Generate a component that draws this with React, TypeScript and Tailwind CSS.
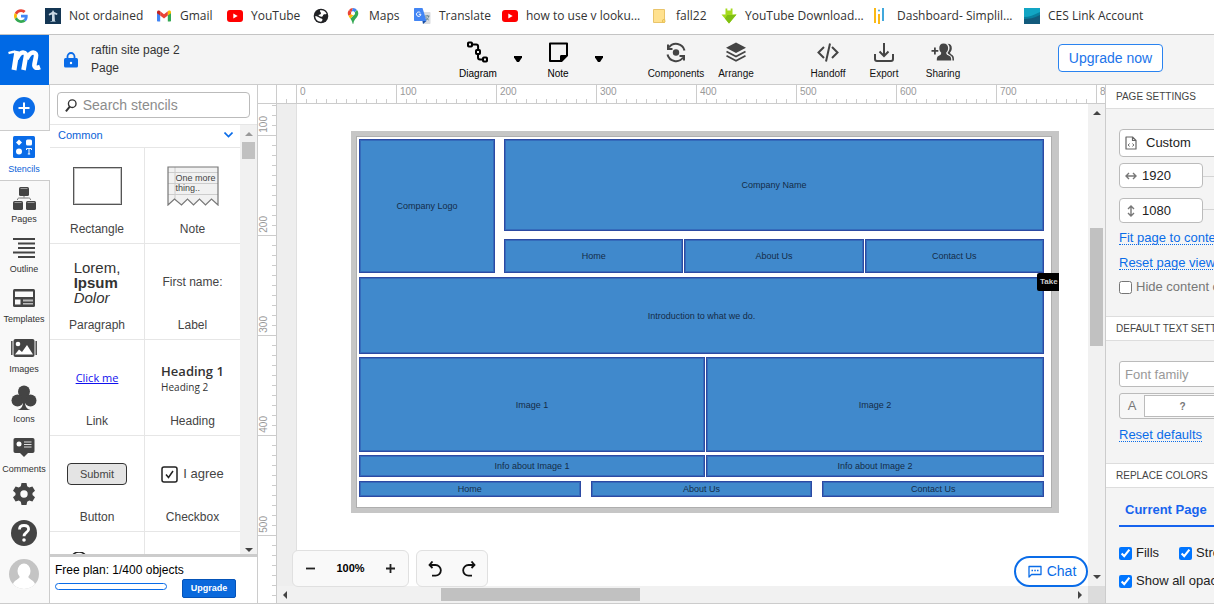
import React from "react";

const arial = "font-['Liberation_Sans',Arial,sans-serif]";

/* ---------- Bookmark icons ---------- */

const GoogleIcon = () => (
  <svg width="14" height="16" viewBox="0 0 48 52" className="shrink-0">
    <path fill="#ea4335" d="M24 12c3.500 0 6.600 1.200 9.100 3.600l6.800-6.800C35.900 5 30.500 2.500 24 2.500 14.600 2.500 6.500 7.900 2.600 15.700l7.900 6.100C12.400 16.200 17.700 12 24 12z" />
    <path fill="#4285f4" d="M47 26.500c0-1.600-.2-3.100-.4-4.500H24v9h12.900c-.6 3-2.200 5.500-4.800 7.200l7.700 6C44.300 40 47 33.900 47 26.500z" />
    <path fill="#fbbc05" d="M10.500 30.700A14 14 0 0 1 10.500 21.800L2.600 15.700a24 24 0 0 0 0 21z" />
    <path fill="#34a853" d="M24 50c6.500 0 11.900-2.100 15.900-5.800l-7.700-6c-2.200 1.400-4.900 2.300-8.200 2.300-6.300 0-11.600-4.200-13.500-9.900l-7.900 6.100C6.500 44.600 14.600 50 24 50z" />
  </svg>
);
const StatueIcon = () => (
  <svg width="16" height="16" viewBox="0 0 16 16" className="shrink-0">
    <rect width="16" height="16" fill="#143654" />
    <path d="M8 2l1.200 2 3.300 1.500-.5 1.500-2.500-.8.500 7.300H7L7 6.500 4 7.500 3.700 6 7 4z" fill="#c8d6e2" />
    <rect x="5.500" y="13" width="5" height="1" fill="#7d98ae" />
  </svg>
);
const GmailIcon = () => (
  <svg width="16" height="16" viewBox="0 0 16 16" className="shrink-0">
    <path d="M1 4v8.500c0 .6.400 1 1 1h2.200V7z" fill="#4285f4" />
    <path d="M15 4v8.500c0 .6-.4 1-1 1h-2.200V7z" fill="#34a853" />
    <path d="M11.800 3.600v4L15 5.200V4c0-1.500-1.600-2-2.600-1.200z" fill="#fbbc04" />
    <path d="M4.200 7.600V3.300L8 6.200l3.800-2.900v4.300L8 10.500z" fill="#ea4335" />
    <path d="M1 4v1.200l3.200 2.400V3.300l-.6-.5C2.600 2 1 2.500 1 4z" fill="#c5221f" />
  </svg>
);
const YouTubeIcon = () => (
  <svg width="16" height="16" viewBox="0 0 16 16" className="shrink-0">
    <rect y="2" width="16" height="12" rx="3" fill="#f00" />
    <path d="M6.300 5.500v5l4.400-2.500z" fill="#fff" />
  </svg>
);
const GlobeIcon = () => (
  <svg width="16" height="16" viewBox="0 0 16 16" className="shrink-0">
    <circle cx="8" cy="8" r="7.300" fill="#202124" />
    <path d="M7 2.300c3-.6 5.800 1 6.600 3.500-1 .8-2.300.2-3.200 1-.8.700-.2 1.700-1.400 1.900C7.400 9 6.200 8 5.300 7 6.500 6.800 7.900 6.500 8 5.300 8 4 6.500 3.800 7 2.300zM2.300 8c1.800.2 3.200 1 4.300 1.800 1 .7 2.500.6 2.900 1.700.2.900-.8 1.400-1.300 2.200C4.700 13.900 2.300 11.500 2.300 8z" fill="#fff" />
  </svg>
);
const MapsIcon = () => (
  <svg width="16" height="16" viewBox="0 0 16 16" className="shrink-0">
    <path d="M8 0a5.200 5.200 0 0 0-4 1.900l2.500 2.200z" fill="#ea4335" />
    <path d="M8 0l-1.500 4.100a2 2 0 0 1 3 .2L12 2A5.200 5.200 0 0 0 8 0z" fill="#4285f4" />
    <path d="M4 1.900A5.300 5.300 0 0 0 3.500 7.800L6.500 6.200A2 2 0 0 1 6.500 4.100z" fill="#ea4335" />
    <path d="M3.500 7.800c.4.900 1.100 1.800 1.900 2.900l4.100-4.900A2 2 0 0 1 6.400 6.200z" fill="#fbbc04" />
    <path d="M12 2 9.500 4.500c.4.600.4 1.300 0 1.900l-4.100 4.300C6.800 12.500 7.300 13.700 7.500 15.300c.1.900.9.900 1 0 .4-4.300 4.800-5.800 4.800-10A5.300 5.300 0 0 0 12 2z" fill="#34a853" />
    <circle cx="8" cy="5.300" r="1.800" fill="#fff" />
  </svg>
);
const TranslateIcon = () => (
  <svg width="17" height="16" viewBox="0 0 17 16" className="shrink-0">
    <path d="M6 4h9.500c.5 0 1 .4 1 1v10c0 .6-.4 1-1 1H9z" fill="#dadce0" />
    <path d="M1 0h7.500l4 13H1c-.6 0-1-.4-1-1V1c0-.6.400-1 1-1z" fill="#4285f4" />
    <path d="M9 16l3.500-3H8.500z" fill="#174ea6" />
    <path d="M6.900 6.300H4.800m1.600-1.500A2.200 2.200 0 1 0 6.900 6.400" fill="none" stroke="#fff" strokeWidth="1" />
    <path d="M11 8h4.500M13.200 7v1m1.500 0c-.3 2-1.500 3.500-2.700 4M11.800 9c.5 1.300 1.800 2.600 3 3" fill="none" stroke="#5f7f8c" strokeWidth=".9" />
  </svg>
);
const FolderIcon = () => (
  <svg width="16" height="16" viewBox="0 0 16 16" className="shrink-0">
    <path d="M1.500 1.500h11v13h-11z" fill="#ffe18f" stroke="#e9c46a" />
    <path d="M10.500 14.500V12l2-1 .500 2.500-.5 1z" fill="#ffd96e" stroke="#e6c15c" />
  </svg>
);
const DownloadIcon = () => (
  <svg width="16" height="16" viewBox="0 0 16 16" className="shrink-0">
    <path d="M4.500.5h1.800v2h3.400v-2h1.800V6.500h4L8 15.500.5 6.500h4z" fill="#a4da1c" />
    <path d="M6.300 7h5.200l4-.5L8 15.500l-4-5z" fill="#7fbf12" />
  </svg>
);
const DashboardIcon = () => (
  <svg width="16" height="16" viewBox="0 0 16 16" className="shrink-0">
    <path d="M2 0v15" stroke="#fbb917" strokeWidth="2" />
    <path d="M6 6v10" stroke="#fbb917" strokeWidth="2" />
    <path d="M10 0v13" stroke="#41a8dc" strokeWidth="2" />
    <circle cx="6" cy="2.500" r="1" fill="#41a8dc" />
  </svg>
);
const CesIcon = () => (
  <svg width="16" height="16" viewBox="0 0 16 16" className="shrink-0">
    <rect width="16" height="16" fill="#12a5c4" />
    <path d="M0 9C5 9 10 7 16 4v12H0z" fill="#087f9f" />
    <path d="M0 11c5 0 10-1 16-4v9H0z" fill="#125a7c" />
  </svg>
);

const bookmarks = [
  { label: "", name: "Google", icon: <GoogleIcon />, width: "w-[31px]" },
  { label: "Not ordained", name: "", icon: <StatueIcon />, width: "w-[111px]" },
  { label: "Gmail", name: "", icon: <GmailIcon />, width: "w-[71px]" },
  { label: "YouTube", name: "", icon: <YouTubeIcon />, width: "w-[86px]" },
  { label: "", name: "Website", icon: <GlobeIcon />, width: "w-[32px]" },
  { label: "Maps", name: "", icon: <MapsIcon />, width: "w-[69px]" },
  { label: "Translate", name: "", icon: <TranslateIcon />, width: "w-[88px]" },
  { label: "how to use v looku...", name: "", icon: <YouTubeIcon />, width: "w-[150px]" },
  { label: "fall22", name: "", icon: <FolderIcon />, width: "w-[69px]" },
  { label: "YouTube Download...", name: "", icon: <DownloadIcon />, width: "w-[152px]" },
  { label: "Dashboard- Simplil...", name: "", icon: <DashboardIcon />, width: "w-[151px]" },
  { label: "CES Link Account", name: "", icon: <CesIcon />, width: "w-[124px]" },
];

function BookmarksBar() {
  return (
    <nav aria-label="Bookmarks" className="flex h-[35px] shrink-0 items-center overflow-hidden border-b border-[#c4c4c4] bg-white pb-[2px] pl-[14px] font-['Open_Sans','Noto_Sans',sans-serif] text-xs text-[#333]">
      {bookmarks.map((b, i) => (
        <a key={i} href="#" aria-label={b.name || undefined} className={`flex shrink-0 items-center gap-2 whitespace-nowrap ${b.width}`}>
          {b.icon}
          {b.label && <span>{b.label}</span>}
        </a>
      ))}
    </nav>
  );
}

/* ---------- Header ---------- */

const DiagramIcon = () => (
  <svg width="24" height="24" viewBox="0 0 24 24" fill="none" stroke="#000" strokeWidth="2">
    <rect x="2" y="2.500" width="4" height="4" rx=".8" />
    <rect x="10" y="10" width="4" height="4" rx=".8" />
    <rect x="17" y="17.500" width="4" height="4" rx=".8" />
    <path d="M7 4.500h3.200c1.400 0 1.900.7 1.900 2V9M12 15v2.500c0 1.500.700 2 2 2h2" />
  </svg>
);
const NoteIcon = () => (
  <svg width="24" height="24" viewBox="0 0 24 24">
    <path d="M4 3.500h17v12l-5.500 5.500H4z" fill="none" stroke="#000" strokeWidth="2" strokeLinejoin="round" />
    <path d="M14 21.500v-5c0-1 .5-1.500 1.500-1.500h6z" />
  </svg>
);
const ComponentsIcon = () => (
  <svg width="24" height="24" viewBox="0 0 24 24" fill="none" stroke="#444" strokeWidth="2">
    <circle cx="12" cy="12.500" r="3.200" fill="#444" stroke="none" />
    <path d="M20.500 10.500A8.700 8.700 0 0 0 5 7.500M3.500 14.500A8.700 8.700 0 0 0 19 17.500" />
    <path d="M4 4.500v4.500h4.500M20 20.500v-4.500h-4.500" />
  </svg>
);
const ArrangeIcon = () => (
  <svg width="24" height="24" viewBox="0 0 24 24" fill="none" stroke="#444" strokeWidth="1.800">
    <path d="M12 2.500l10 5.200-10 5.300L2 7.700z" fill="#444" stroke="none" />
    <path d="M2.500 11.500l9.500 5 9.500-5M2.500 15.800l9.500 5 9.500-5" />
  </svg>
);
const HandoffIcon = () => (
  <svg width="24" height="24" viewBox="0 0 24 24" fill="none" stroke="#444" strokeWidth="2">
    <path d="M8 7L2.500 12.500l5.500 5.500M16 7l5.500 5.500L16 18M14 3.500l-4 18" />
  </svg>
);
const ExportIcon = () => (
  <svg width="24" height="24" viewBox="0 0 24 24" fill="none" stroke="#444" strokeWidth="2">
    <path d="M12 3v13M7.500 11.500L12 16l4.500-4.500M3 14v5c0 1.400.6 2 2 2h14c1.400 0 2-.6 2-2v-5" />
  </svg>
);
const SharingIcon = () => (
  <svg width="28" height="24" viewBox="0 0 28 24" fill="#444">
    <path d="M5 7.500h1.800V10H9.300v1.800H6.800v2.700H5v-2.700H2.500V10H5z" />
    <path d="M14.500 3.500c3 0 4.600 1.800 4.600 4.500 0 2-.7 3.600-1.900 4.600 0 2 1.200 2.500 3.400 3.500 1.200.6 1.600 1.600 1.600 4.400H7.800c0-2.800.4-3.800 1.600-4.400 2.200-1 2.800-1.500 2.800-3.500-1.200-1-1.900-2.600-1.900-4.600 0-2.700 1.400-4.500 4.200-4.500z" />
    <path d="M18.500 3.700c3 0 4.500 1.800 4.300 4.800-.1 1.700-.8 3-1.800 3.900.3 2 3.300 2.200 3.700 4.600.2 1 .3 2 .3 3.500h-1.500c0-3.500-.6-4.500-2.400-5.300-1.400-.7-2.400-1.200-2.500-2.600 2.700-3.200 2.500-7-.1-8.900z" />
  </svg>
);

function Tool({ label, icon, width, dark }: { label: string; icon: React.ReactNode; width: string; dark?: boolean }) {
  return (
    <button className={`flex flex-col items-center gap-1 text-[10px] leading-3 ${dark ? "text-black" : "text-[#111]"} ${width}`}>
      {icon}
      <span>{label}</span>
    </button>
  );
}
function Caret({ label }: { label: string }) {
  return (
    <button aria-label={label} className="flex w-5 items-center justify-center pb-[2px]">
      <svg width="8" height="6" viewBox="0 0 8 6"><path d="M0 0h8v1.500L5 6H3L0 1.500z" /></svg>
    </button>
  );
}

function Header() {
  return (
    <header className="flex h-[50px] shrink-0 bg-[#f4f4f4]">
      <a href="#" aria-label="Home" className="flex w-[49px] shrink-0 items-center justify-center bg-[#0069e5]">
        <svg width="33" height="21" viewBox="0 0 33 21" fill="none" stroke="#fff" strokeLinejoin="round">
          <path d="M.5 3.200C3 2.500 4.500 1.800 7 1.800" strokeWidth="2.400" />
          <path d="M9 1L6 20" strokeWidth="5" />
          <path d="M8.500 9C11 4 13 2.500 15 2.500c2.800 0 3.300 2 2.800 4.500L15.500 20" strokeWidth="4.600" />
          <path d="M18.500 9c2.500-5 4.500-6.500 6.700-6.500 2.500 0 3.200 2 2.700 4.500L26.500 14c-.6 3.400 1.500 4.600 5.500 3" strokeWidth="4.600" />
        </svg>
      </a>
      <div className="flex min-w-0 flex-1 items-center border-b border-[#ccc]">
        <div className="flex min-w-0 flex-1 items-center gap-[13px] pl-[15px]">
          <svg width="14" height="16" viewBox="0 0 14 16" className="shrink-0">
            <path d="M3.500 7V4.500a3.500 3.500 0 0 1 7 0V7" fill="none" stroke="#0a6ce8" strokeWidth="1.800" />
            <rect y="6" width="14" height="9.500" rx="1.500" fill="#0a6ce8" />
            <circle cx="7" cy="11" r="1.200" fill="#fff" />
          </svg>
          <div className="pb-[2px] text-xs leading-[18px] text-[#333]">
            <h1>raftin site page 2</h1>
            <p>Page</p>
          </div>
        </div>
        <div className="flex shrink-0 items-center">
          <Tool label="Diagram" icon={<DiagramIcon />} width="w-10" dark />
          <div className="w-[10px]" />
          <Caret label="Diagram options" />
          <div className="w-[10px]" />
          <Tool label="Note" icon={<NoteIcon />} width="w-10" dark />
          <div className="w-[11px]" />
          <Caret label="Note options" />
          <div className="w-[37px]" />
          <Tool label="Components" icon={<ComponentsIcon />} width="w-[60px]" />
          <Tool label="Arrange" icon={<ArrangeIcon />} width="w-[60px]" />
          <div className="w-[34px]" />
          <Tool label="Handoff" icon={<HandoffIcon />} width="w-14" />
          <Tool label="Export" icon={<ExportIcon />} width="w-14" />
          <Tool label="Sharing" icon={<SharingIcon />} width="w-[62px]" />
        </div>
        <button className="mt-[-4px] mr-[51px] ml-[84px] h-[28px] w-[105px] shrink-0 rounded border border-[#2a83f0] bg-white text-sm text-[#2174ea]">
          Upgrade now
        </button>
      </div>
    </header>
  );
}

/* ---------- Left rail ---------- */

const dark = "#444";
const StencilsIcon = () => (
  <svg width="22" height="22" viewBox="0 0 22 22">
    <rect width="22" height="22" rx="1.500" fill="#0a6ce8" />
    <path d="M6 3.500L9 6.500 6 9.500 3 6.500z" fill="#fff" />
    <rect x="13" y="3.500" width="6" height="6" rx="1.500" fill="#fff" />
    <circle cx="6" cy="15.500" r="3" fill="#fff" />
    <path d="M13.500 14v-1.500h5V14M16 12.500V18M14.800 18h2.400" fill="none" stroke="#fff" />
  </svg>
);
const PagesIcon = () => (
  <svg width="24" height="24" viewBox="0 0 24 24" fill={dark}>
    <rect x="7" y="1" width="10" height="9" rx="1.500" />
    <rect x="1" y="15" width="10" height="9" rx="1.500" />
    <rect x="14" y="15" width="10" height="9" rx="1.500" />
    <path d="M8.500 2.500h7M2.500 16.500h7M15.500 16.500h7" stroke="#999" />
    <path d="M12 10v1.500M5.500 14c0-1.500.5-2 2-2h9c1.500 0 2 .5 2 2" fill="none" stroke="#777" />
  </svg>
);
const OutlineIcon = () => (
  <svg width="22" height="20" viewBox="0 0 22 20" stroke={dark} strokeWidth="2">
    <path d="M0 1h22M5 5.500h17M5 10h17M0 14.500h22M5 19h17" />
  </svg>
);
const TemplatesIcon = () => (
  <svg width="22" height="18" viewBox="0 0 22 18">
    <rect width="22" height="18" rx="1.500" fill={dark} />
    <path d="M2 2.500h18V8H2zM2 10.500h5.500v5H2z" fill="#f9f9f9" />
    <path d="M10 10.500h10v2H10zM10 14h10v1.500H10z" fill="#bbb" />
  </svg>
);
const ImagesIcon = () => (
  <svg width="26" height="18" viewBox="0 0 26 18">
    <path d="M.8 2v14M25.200 2v14" stroke={dark} strokeWidth="1.400" />
    <rect x="2.500" y="0" width="21" height="18" rx="2" fill={dark} />
    <circle cx="7" cy="5" r="2.300" fill="#fff" />
    <path d="M4 15.500l4-5 3 2.500 5-7 6 9.500z" fill="#fff" />
  </svg>
);
const ClubIcon = () => (
  <svg width="26" height="26" viewBox="0 0 26 26" fill={dark}>
    <circle cx="13" cy="6.500" r="6" />
    <circle cx="6.500" cy="15.500" r="6" />
    <circle cx="19.500" cy="15.500" r="6" />
    <path d="M11 10h4l1 6-2 1c0 4 1.500 7 5.500 8h-13c4-1 5.500-4 5.500-8l-2-1z" />
  </svg>
);
const CommentsIcon = () => (
  <svg width="22" height="19" viewBox="0 0 22 19">
    <path d="M2.500 0h17C21 0 21.500.8 21.500 2v11c0 1.300-.6 2-2 2H15l-4 4-4-4H2.500c-1.400 0-2-.7-2-2V2C.5.8 1 0 2.500 0z" fill={dark} />
    <circle cx="6" cy="6" r="2.500" fill="#fff" />
    <path d="M11 4h7.500M11 6.500h7.500M11 9h7.500" stroke="#ddd" strokeWidth="1.200" />
  </svg>
);
const GearIcon = () => (
  <svg width="22" height="22" viewBox="0 0 22 22">
    <path fillRule="evenodd" d="M8.500 0h5l.7 3.300 2 1.100 3.200-1L22 7.700 19.500 10v2l2.500 2.300-2.600 4.300-3.200-1-2 1.100-.7 3.300h-5l-.7-3.300-2-1.100-3.200 1L0 14.300 2.500 12v-2L0 7.700l2.600-4.300 3.200 1 2-1.100zM11 7.300a3.700 3.700 0 1 0 0 7.400 3.700 3.700 0 0 0 0-7.400z" fill={dark} />
  </svg>
);
const HelpIcon = () => (
  <svg width="26" height="26" viewBox="0 0 26 26">
    <circle cx="13" cy="13" r="13" fill={dark} />
    <path d="M8.500 9.500C8.500 7 10.300 5.500 13 5.500s4.600 1.500 4.600 3.800c0 3.200-4.600 3.200-4.600 7" fill="none" stroke="#fff" strokeWidth="2.800" />
    <circle cx="13" cy="20" r="1.800" fill="#fff" />
  </svg>
);
const AvatarIcon = () => (
  <svg width="30" height="30" viewBox="0 0 30 30">
    <clipPath id="avatar"><circle cx="15" cy="15" r="15" /></clipPath>
    <g clipPath="url(#avatar)">
      <rect width="30" height="30" fill="#c4c4c4" />
      <ellipse cx="15" cy="12" rx="6.500" ry="7.500" fill="#fff" />
      <path d="M11 17h8c0 3 6 4 7 8v5H4v-5c1-4 7-5 7-8z" fill="#fff" />
    </g>
  </svg>
);

const railItems = [
  { label: "Pages", icon: <PagesIcon /> },
  { label: "Outline", icon: <OutlineIcon /> },
  { label: "Templates", icon: <TemplatesIcon /> },
  { label: "Images", icon: <ImagesIcon /> },
  { label: "Icons", icon: <ClubIcon /> },
  { label: "Comments", icon: <CommentsIcon /> },
];

function Rail() {
  return (
    <nav aria-label="Panels" className="flex w-[50px] shrink-0 flex-col bg-[#f9f9f9] text-[9px] leading-[12px] text-[#333]">
      <button aria-label="Add" className="flex h-[45px] shrink-0 items-center justify-center border-r border-[#ccc] pr-px">
        <svg width="22" height="22" viewBox="0 0 22 22">
          <circle cx="11" cy="11" r="11" fill="#0a6ce8" />
          <path d="M11 5.500v11M5.500 11h11" stroke="#fff" strokeWidth="2" />
        </svg>
      </button>
      <button className="flex h-[51px] shrink-0 flex-col items-center border-y border-[#ccc] bg-white pr-[2px] text-[#0a62d8]">
        <span className="flex h-[32px] items-center">
          <StencilsIcon />
        </span>
        <span>Stencils</span>
      </button>
      {railItems.map((it) => (
        <button key={it.label} className="flex h-[50px] shrink-0 flex-col items-center border-r border-[#ccc] pr-px">
          <span className="flex h-[32px] items-center pt-px">{it.icon}</span>
          <span>{it.label}</span>
        </button>
      ))}
      <div className="flex flex-1 flex-col items-center border-r border-[#ccc] pt-[2px] pr-px">
        <button aria-label="Settings"><GearIcon /></button>
        <button aria-label="Help" className="mt-[15px]"><HelpIcon /></button>
        <button aria-label="Account" className="mt-[13px]"><AvatarIcon /></button>
      </div>
    </nav>
  );
}

/* ---------- Stencils ---------- */

const NoteStencil = () => (
  <div className="relative h-[40px] w-[52px] pt-[7px] pl-[9px] text-left text-[9px] leading-[10px] text-[#444]">
    <svg width="52" height="40" viewBox="0 0 52 40" className="absolute top-0 left-0" fill="none">
      <path d="M1 39V1h50v38l-6.500-6-6 6-6-6-6 6-6-6-6 6-7-6z" fill="#f1f1f1" />
      <path d="M1 6.500h50M1 17.500h50M1 28.500h50M8 1v33" stroke="#ccc" />
      <path d="M1 39V1h50v38l-6.500-6-6 6-6-6-6 6-6-6-6 6-7-6z" stroke="#777" strokeWidth="1.200" />
    </svg>
    <span className="relative whitespace-nowrap">One more<br />thing..</span>
  </div>
);

const stencils = [
  { label: "Rectangle", preview: <div className="h-[38px] w-[49px] border border-[#555] bg-white shadow-[inset_0_0_0_1px_#c4c4c4]" /> },
  { label: "Note", preview: <NoteStencil /> },
  {
    label: "Paragraph",
    preview: (
      <div className="text-left text-[15px] leading-[15px] text-[#333]">
        <div>Lorem,</div><div className="font-bold">Ipsum</div><div className="italic">Dolor</div>
      </div>
    ),
  },
  { label: "Label", preview: <span className="text-[12px] text-[#444]">First name:</span> },
  { label: "Link", preview: <span className="font-['Open_Sans',sans-serif] text-[11px] text-[#1010ee] underline">Click me</span> },
  {
    label: "Heading",
    preview: (
      <div className="text-left font-['Open_Sans',sans-serif] text-[#333]">
        <div className="text-[13px] leading-[18px] font-semibold">Heading 1</div>
        <div className="text-[10px] leading-[15px]">Heading 2</div>
      </div>
    ),
  },
  { label: "Button", preview: <span className="flex h-[22px] w-[60px] items-center justify-center rounded-[4px] border border-[#333] bg-[#e4e4e4] text-[11px] text-[#444]">Submit</span> },
  {
    label: "Checkbox",
    preview: (
      <span className="flex items-center gap-[5px] text-[13px] text-[#444]">
        <svg width="17" height="17" viewBox="0 0 17 17" fill="none" stroke="#222">
          <rect x="1" y="1" width="15" height="15" rx="2" strokeWidth="1.500" />
          <path d="M5 8.500l2.500 3L12 5" strokeWidth="1.500" />
        </svg>
        I agree
      </span>
    ),
  },
  { label: "", preview: <svg width="60" height="36" viewBox="0 0 60 36"><circle cx="12" cy="8" r="8" fill="#fff" stroke="#222" strokeWidth="1.500" /></svg> },
  { label: "", preview: null },
];

const Arrow = ({ dir, muted }: { dir: "up" | "down" | "left" | "right"; muted?: boolean }) => {
  const d = { up: "M0 6l4-4 4 4z", down: "M0 2l4 4 4-4z", left: "M6 0L2 4l4 4z", right: "M2 0l4 4-4 4z" }[dir];
  return <svg width="8" height="8" viewBox="0 0 8 8" className="shrink-0" fill={muted ? "#999" : "#444"}><path d={d} /></svg>;
};

function StencilPanel() {
  return (
    <aside className="flex w-[207px] shrink-0 flex-col bg-white">
      <div className="h-[40px] shrink-0 border-b border-[#e6e6e6] px-[7px] pt-[7px]">
        <label className="flex h-[26px] items-center gap-[6px] rounded-[4px] border border-[#bbb] pl-[7px]">
          <svg width="13" height="15" viewBox="0 0 13 15" fill="none" stroke="#333">
            <circle cx="8" cy="5.500" r="4.200" strokeWidth="1.500" />
            <path d="M5.500 8.500L1 14" strokeWidth="2.200" />
          </svg>
          <input aria-label="Search stencils" placeholder="Search stencils" className="w-full min-w-0 bg-transparent text-[14px] outline-none placeholder:text-[#8c8c8c]" />
        </label>
      </div>
      <div className="flex min-h-0 flex-1">
        <div className="flex min-w-0 flex-1 flex-col overflow-hidden">
          <button className="flex h-[23px] shrink-0 items-center justify-between border-b border-[#e6e6e6] pr-[7px] pb-[2px] pl-[8px] text-[11px] text-[#0a62d8]">
            Common
            <svg width="9" height="6" viewBox="0 0 9 6" fill="none" stroke="#0a6ce8" strokeWidth="1.600"><path d="M.5.5l4 4 4-4" /></svg>
          </button>
          <div className="grid grid-cols-2">
            {stencils.map((s, i) => (
              <div key={i} className={`flex h-[96px] flex-col items-center border-b border-[#e6e6e6] ${i % 2 === 0 ? "border-r" : ""}`}>
                <div className="flex h-[73px] items-center justify-center pt-[3px]">{s.preview}</div>
                <div className="text-xs leading-4 text-[#444]">{s.label}</div>
              </div>
            ))}
          </div>
        </div>
        <div className="flex w-[17px] shrink-0 flex-col items-center bg-[#f1f1f1] pt-[5px]">
          <Arrow dir="up" muted />
          <div className="mt-[4px] h-[17px] w-[13px] bg-[#c1c1c1]" />
          <div className="flex-1" />
          <Arrow dir="down" />
        </div>
      </div>
      <div className="h-[49px] shrink-0 border-t-[3px] border-[#ccc] pt-[5px] pl-[5px]">
        <div className="text-xs leading-4 text-black">Free plan: 1/400 objects</div>
        <div className="flex gap-[15px] pt-[1px]">
          <div className="mt-[4px] h-[7px] w-[112px] rounded-full border border-[#0a6ce8]" />
          <button className="h-[19px] w-[54px] rounded-[2px] border border-[#0553b8] bg-[#0a69dc] text-[9px] leading-[17px] font-bold text-white">Upgrade</button>
        </div>
      </div>
    </aside>
  );
}

/* ---------- Workspace ---------- */

const ticks = [1, 2, 3, 4, 5, 6, 7, 8, 9];

function TopRuler() {
  return (
    <div className="flex h-[19px] shrink-0 overflow-hidden border-b border-[#ccc] bg-white text-[10px] leading-[12px] text-[#999]">
      <div className="w-[18px] shrink-0" />
      <div className="flex w-[20px] shrink-0 items-end justify-center border-l border-[#ccc]"><span className="h-[4px] border-l border-[#ccc]" /></div>
      {[0, 100, 200, 300, 400, 500, 600, 700, 800].map((n) => (
        <div key={n} className="flex w-[100px] shrink-0 flex-col justify-between border-l border-[#ccc] pt-px">
          <span className="pl-[3px]">{n}</span>
          <span className="flex">{ticks.map((t) => <i key={t} className="h-[4px] w-[10px] border-r border-[#ccc]" />)}</span>
        </div>
      ))}
    </div>
  );
}

function LeftRuler() {
  return (
    <div className="flex w-[19px] shrink-0 flex-col overflow-hidden border-r border-[#ccc] bg-white text-[10px] leading-[12px] text-[#999]">
      {["100", "200", "300", "400", "500", ""].map((n) => (
        <div key={n} className="flex h-[100px] shrink-0 items-end justify-between border-b border-[#ccc] first:mt-[-68px]">
          <span className="rotate-180 pt-[2px] [writing-mode:vertical-rl]">{n}</span>
          <span className="flex h-full flex-col">{ticks.map((t) => <i key={t} className="h-[10px] w-[4px] border-b border-[#ccc]" />)}</span>
        </div>
      ))}
    </div>
  );
}

const Block = ({ children, className }: { children: React.ReactNode; className: string }) => (
  <div className={`flex items-center justify-center border border-[#2c4aa3] bg-[#4089cc] shadow-[inset_0_0_0_1px_#356bbb] ${className}`}>{children}</div>
);

function Wireframe() {
  return (
    <section aria-label="Page wireframe" className="relative mt-[27px] ml-[54px] h-[382px] w-[708px] shrink-0 overflow-hidden bg-[#c6c6c6] py-[5px] pr-[7px] pl-[5px] text-[9px] leading-3 text-[#142c48]">
      <div className="flex h-full flex-col gap-[3px] border border-[#aeaeae] bg-white pt-[2px] pr-[7px] pl-[2px]">
        <div className="flex gap-[9px] pb-px">
          <Block className="h-[134px] w-[136px]">Company Logo</Block>
          <div className="flex flex-1 flex-col gap-[8px]">
            <Block className="h-[92px]">Company Name</Block>
            <div className="grid grid-cols-3 gap-px">
              <Block className="h-[34px]">Home</Block>
              <Block className="h-[34px]">About Us</Block>
              <Block className="h-[34px]">Contact Us</Block>
            </div>
          </div>
        </div>
        <Block className="h-[77px]">Introduction to what we do.</Block>
        <div className="grid grid-cols-[346px_1fr] gap-x-px gap-y-[3px] pb-px">
          <Block className="h-[95px]">Image 1</Block>
          <Block className="h-[95px]">Image 2</Block>
          <Block className="h-[22px]">Info about Image 1</Block>
          <Block className="h-[22px]">Info about Image 2</Block>
        </div>
        <div className="grid grid-cols-3 gap-[10px]">
          <Block className="h-[16px]">Home</Block>
          <Block className="h-[16px]">About Us</Block>
          <Block className="h-[16px]">Contact Us</Block>
        </div>
      </div>
      <div className="absolute top-[142px] right-0 h-[18px] w-[22px] rounded-l-[2px] bg-black pl-[3px] text-[8px] leading-[18px] font-bold text-[#ccc]">Take</div>
    </section>
  );
}

function Workspace() {
  return (
    <main className="flex min-w-0 flex-1 flex-col border-l border-[#ccc]">
      <TopRuler />
      <div className="flex min-h-0 flex-1">
        <LeftRuler />
        <div className="flex min-w-0 flex-1 flex-col">
          <div className="flex min-h-0 flex-1">
            <div className="relative flex min-w-0 flex-1 items-start bg-white">
              <div className="w-[20px] shrink-0 self-stretch border-r border-[#e0e0e0] bg-[#eee]" />
              <Wireframe />
              <div className="absolute -bottom-px left-[15px] flex gap-[7px]">
                <div className="flex h-[37px] w-[117px] items-center justify-between rounded-[6px] border border-[#e0e0e0] bg-[#f9f9f9] px-[13px]">
                  <button aria-label="Zoom out"><svg width="9" height="9" stroke="#222" strokeWidth="1.800"><path d="M0 4.500h9" /></svg></button>
                  <span className="text-[11px] font-bold text-black">100%</span>
                  <button aria-label="Zoom in"><svg width="9" height="9" stroke="#222" strokeWidth="1.800"><path d="M0 4.500h9M4.500 0v9" /></svg></button>
                </div>
                <div className="flex h-[37px] w-[72px] items-center justify-between rounded-[6px] border border-[#e0e0e0] bg-[#f9f9f9] px-[11px]">
                  <button aria-label="Undo"><svg width="14" height="16" viewBox="0 0 14 16" fill="none" stroke="#111" strokeWidth="1.800"><path d="M4.500.5L1.500 4l3 3M2 4h5.500a5.300 5.300 0 0 1 0 10.700H4" /></svg></button>
                  <button aria-label="Redo"><svg width="14" height="16" viewBox="0 0 14 16" fill="none" stroke="#111" strokeWidth="1.800"><path d="M9.500.5l3 3.500-3 3M12 4H6.500a5.300 5.300 0 0 0 0 10.700H10" /></svg></button>
                </div>
              </div>
              <button className="absolute right-0 -bottom-px flex h-[31px] w-[74px] items-center justify-center gap-[5px] rounded-full border-2 border-[#0a6ce8] bg-white pl-[2px] text-[14px] text-[#0a6ce8]">
                <svg width="14" height="13" viewBox="0 0 14 13" fill="none" stroke="#0a6ce8" strokeWidth="1.300">
                  <path d="M1 12V1.500h12v8H3.500z" strokeLinejoin="round" />
                  <path d="M3.500 5.500h1.500M6.300 5.500h1.500M9 5.500h1.500" />
                </svg>
                Chat
              </button>
            </div>
            <div className="flex w-[17px] shrink-0 flex-col items-center bg-[#f1f1f1] py-[5px]">
              <Arrow dir="up" />
              <div className="mt-[111px] h-[118px] w-[13px] bg-[#c1c1c1]" />
              <div className="flex-1" />
              <Arrow dir="down" />
            </div>
          </div>
          <div className="flex h-[17px] shrink-0">
            <div className="flex min-w-0 flex-1 items-center bg-[#f1f1f1] px-[4px]">
              <Arrow dir="left" />
              <div className="ml-[152px] h-[13px] w-[199px] bg-[#c1c1c1]" />
              <div className="flex-1" />
              <Arrow dir="right" />
            </div>
            <div className="w-[17px] bg-[#dcdcdc]" />
          </div>
        </div>
      </div>
    </main>
  );
}

/* ---------- Settings ---------- */

const SectionTitle = ({ children }: { children: React.ReactNode }) => (
  <h2 className="flex h-[25px] items-center border-y border-[#ddd] bg-white pl-[10px] text-[10px] text-[#444]">{children}</h2>
);
const PanelLink = ({ children }: { children: React.ReactNode }) => (
  <a href="#" className="self-start border-b border-dotted border-[#0a6ce8] text-[13px] leading-[13px] text-[#0a6ce8]">{children}</a>
);

function Settings() {
  return (
    <aside className="w-[109px] shrink-0 overflow-hidden border-l border-[#ccc] bg-[#f4f4f4] text-[13px]">
      <div className="flex w-[240px] flex-col whitespace-nowrap">
        <div className="-mt-px"><SectionTitle>PAGE SETTINGS</SectionTitle></div>
        <div className="flex h-[207px] flex-col pt-[20px] pl-[13px]">
          <div className="flex h-[28px] items-center rounded-[4px] border border-[#bbb] bg-white pl-[5px]">
            <svg width="12" height="14" viewBox="0 0 12 14" fill="none" stroke="#666" strokeWidth="1.200">
              <path d="M1 1h6.500L11 4.500V13H1zM7.500 1v3.500H11" strokeLinejoin="round" />
              <path d="M4.500 7.500L3.200 9l1.300 1.500M7.500 7.500L8.800 9l-1.300 1.500" strokeWidth="1" />
            </svg>
            <select aria-label="Page size" className="ml-[9px] flex-1 appearance-none bg-transparent text-[13px] text-[#222] outline-none"><option>Custom</option></select>
          </div>
          <div className="flex items-center">
            <div className="flex flex-col gap-[10px] pt-[6px]">
              <label className="flex h-[25px] w-[84px] items-center gap-[5px] rounded-[4px] border border-[#bbb] bg-white pl-[5px]">
                <svg width="12" height="10" viewBox="0 0 12 10" fill="none" stroke="#777" strokeWidth="1.400" className="shrink-0"><path d="M1 5h10M4 2L1 5l3 3M8 2l3 3-3 3" /></svg>
                <input aria-label="Width" defaultValue="1920" className="w-full min-w-0 bg-transparent text-[13px] leading-4 text-[#222] outline-none" />
              </label>
              <label className="flex h-[25px] w-[84px] items-center gap-[5px] rounded-[4px] border border-[#bbb] bg-white pl-[5px]">
                <svg width="12" height="12" viewBox="0 0 12 12" fill="none" stroke="#777" strokeWidth="1.400" className="shrink-0"><path d="M6 1v10M3 4l3-3 3 3M3 8l3 3 3-3" /></svg>
                <input aria-label="Height" defaultValue="1080" className="w-full min-w-0 bg-transparent text-[13px] leading-4 text-[#222] outline-none" />
              </label>
            </div>
            <div className="mt-[6px] h-[34px] w-[18px] border-y border-[#d4d4d4]" />
          </div>
          <div className="flex flex-col gap-[11px] pt-[8px]">
            <PanelLink>Fit page to content</PanelLink>
            <PanelLink>Reset page view</PanelLink>
          </div>
          <label className="flex items-center gap-[4px] pt-[9px] leading-4 text-[#777]">
            <input type="checkbox" className="h-[13px] w-[13px]" />
            Hide content outside page
          </label>
        </div>
        <SectionTitle>DEFAULT TEXT SETTINGS</SectionTitle>
        <div className="flex h-[122px] flex-col pt-[20px] pl-[13px]">
          <input aria-label="Font family" placeholder="Font family" className="h-[26px] shrink-0 rounded-[3px] border border-[#bbb] bg-white pl-[5px] text-[13px] outline-none placeholder:text-[#999]" />
          <label className="mt-[6px] flex h-[26px] shrink-0 items-center rounded-[3px] border border-[#bbb] bg-[#f7f7f7]">
            <span className="w-[24px] text-center text-[13px] text-[#777]">A</span>
            <input aria-label="Font size" placeholder="?" className="h-[22px] w-[77px] border border-[#bbb] bg-white text-center text-[10px] font-bold outline-none placeholder:text-[#777]" />
          </label>
          <div className="flex pt-[9px]"><PanelLink>Reset defaults</PanelLink></div>
        </div>
        <SectionTitle>REPLACE COLORS</SectionTitle>
        <div className="pl-[13px]">
          <button className="mt-[11px] h-[28px] w-full border-b-2 border-[#1663ee] pb-[5px] pl-[6px] text-left text-[13px] font-bold text-[#1663ee]">Current Page</button>
          <div className="flex gap-[20px] pt-[18px] leading-4 text-[#222]">
            <label className="flex items-center gap-[4px]"><input type="checkbox" defaultChecked className="h-[13px] w-[13px]" />Fills</label>
            <label className="flex items-center gap-[4px]"><input type="checkbox" defaultChecked className="h-[13px] w-[13px]" />Strokes</label>
          </div>
          <label className="flex items-center gap-[4px] pt-[12px] leading-4 text-[#222]"><input type="checkbox" defaultChecked className="h-[13px] w-[13px]" />Show all opacities</label>
        </div>
      </div>
    </aside>
  );
}

export default function App() {
  return (
    <div className={`flex h-screen flex-col overflow-hidden bg-white pr-px pb-px ${arial}`}>
      <BookmarksBar />
      <Header />
      <div className="flex min-h-0 flex-1 border-b border-[#ccc]">
        <Rail />
        <StencilPanel />
        <Workspace />
        <Settings />
      </div>
    </div>
  );
}
